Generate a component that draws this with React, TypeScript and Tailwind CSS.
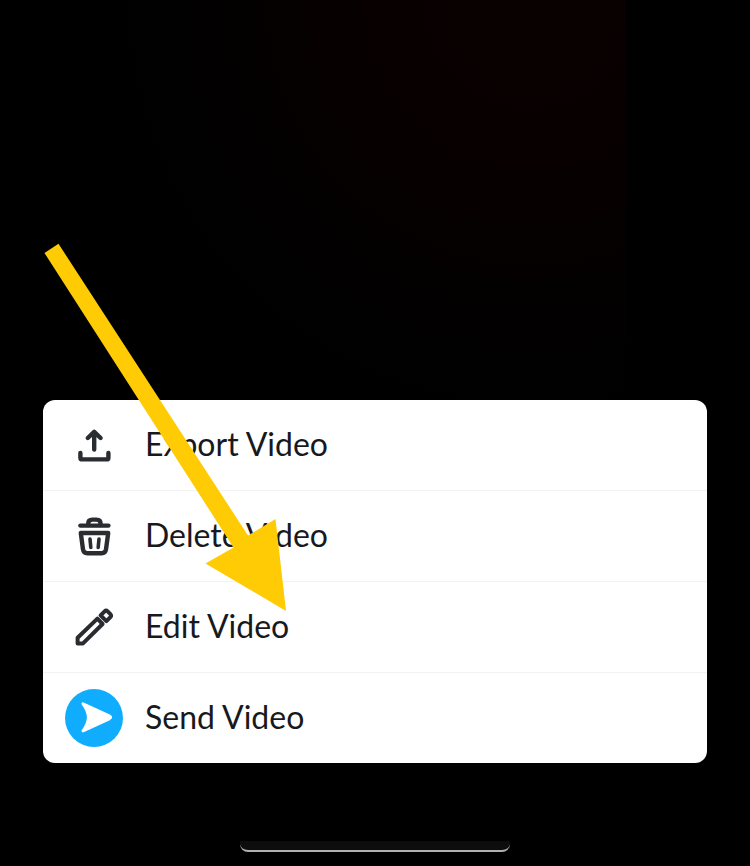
import type React from "react"

type MenuItem = {
  label: string
  icon: React.ReactNode
}

const iconProps = {
  viewBox: "0 0 58 58",
  fill: "none",
  stroke: "#292c31",
  strokeWidth: 4.4,
  strokeLinecap: "round",
  strokeLinejoin: "round",
  "aria-hidden": true,
  className: "size-[58px] shrink-0",
} as const

const ExportIcon: React.FC = () => (
  <svg {...iconProps}>
    <path d="M29.2 33.5V16M22.8 22l6.4-6.2 6.4 6.2" />
    <path d="M15.4 37v4.7q0 1.7 1.7 1.7h24.6q1.7 0 1.7-1.7V37" />
  </svg>
)

const TrashIcon: React.FC = () => (
  <svg {...iconProps}>
    <path d="M15.4 18.6h28" />
    <path d="M23.2 18v-1.2q0-4.2 4.2-4.2h4q4.2 0 4.2 4.2V18" />
    <path d="M15.8 26h27.4l-2.2 16.4q-.6 3.8-4.4 3.8H22.4q-3.8 0-4.4-3.8z" />
    <path d="M25 32l.8 8.4M34 32l-.8 8.4" strokeWidth="3.6" />
  </svg>
)

const PencilIcon: React.FC = () => (
  <svg {...iconProps} strokeWidth={4}>
    <path d="M12.6 39.8L32.4 20.6l5.2 5.4L18 45.4h-5.4z" />
    <path d="M39.6 13.4q1.5-1.5 3 0l2.8 2.8q1.5 1.5 0 3l-4 4-5.8-5.8z" />
  </svg>
)

const SendIcon: React.FC = () => (
  <svg {...iconProps}>
    <circle cx="29" cy="29" r="29" fill="#10adff" stroke="none" />
    <path
      d="M18 14.8L44.2 26.8Q47 28.3 44.2 29.8L18 41.8Q23.4 34.6 23.4 28.3T18 14.8z"
      fill="#fff"
      stroke="#fff"
      strokeWidth="3"
    />
  </svg>
)

const items: MenuItem[] = [
  { label: "Export Video", icon: <ExportIcon /> },
  { label: "Delete Video", icon: <TrashIcon /> },
  { label: "Edit Video", icon: <PencilIcon /> },
  { label: "Send Video", icon: <SendIcon /> },
]

const App: React.FC = () => {
  return (
    <main className="min-h-screen flex flex-col bg-black pb-[14px] font-[Lato,sans-serif]">
      {/* Dimmed video behind the menu */}
      <div className="flex-1 mr-[16.5%] bg-[radial-gradient(circle_at_85%_0%,#0a0000_0%,#080000_25%,#020001_50%,#000_75%)]" />

      <div className="relative mx-[43px]">
        <ul className="rounded-xl bg-white divide-y divide-[#f2f2f3] overflow-hidden">
          {items.map((item) => (
            <li key={item.label}>
              <button
                type="button"
                className="w-full h-[90px] px-[22px] flex items-center gap-[22px] text-left text-[32px] leading-10 text-[#18191c] cursor-pointer"
              >
                {item.icon}
                <span className="pb-0.5">{item.label}</span>
              </button>
            </li>
          ))}
        </ul>

        {/* Arrow pointing at Edit Video */}
        <svg
          viewBox="0 0 244 368"
          aria-hidden="true"
          className="absolute left-0 bottom-[152px] w-[244px] h-[368px] pointer-events-none"
        >
          <path d="M1.5 10L15.5 .8L205 292.5L232.5 276L243 368L162.5 320.5L190.5 304.5z" fill="#ffcb05" />
        </svg>
      </div>

      {/* Home indicator */}
      <div className="mt-[78px] mx-auto w-[36%] h-[11px] rounded-b-lg border-b-2 border-[#b0b0b0] bg-[#0d0d0d]" />
    </main>
  )
}

export default App
